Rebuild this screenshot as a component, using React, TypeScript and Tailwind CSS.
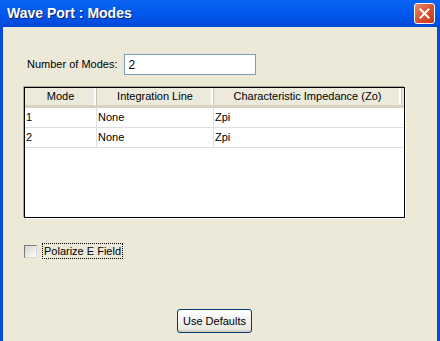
const cols = [
  { title: "Mode", w: "w-[72px]" },
  { title: "Integration Line", w: "w-[117px]" },
  { title: "Characteristic Impedance (Zo)", w: "w-[188px]" },
]

const rows = [
  ["1", "None", "Zpi"],
  ["2", "None", "Zpi"],
]

export default function App() {
  return (
    <div className="w-[440px] h-[341px] flex flex-col overflow-hidden font-['Liberation_Sans',Arial,sans-serif] text-[11px] text-black">
      {/* title bar */}
      <div className="h-[27px] shrink-0 flex items-center justify-between pl-[7px] pr-[5px] bg-gradient-to-b from-[#0A64F0] via-[#0058EE] to-[#0048D8]">
        <span className="text-white font-bold text-[14px] [text-shadow:1px_1px_0_#0A1E6E]">
          Wave Port : Modes
        </span>
        <div className="w-[21px] h-[21px] rounded-[3px] border border-white bg-gradient-to-br from-[#E8896A] via-[#D9532F] to-[#C0391B] flex items-center justify-center">
          <svg width="11" height="11" viewBox="0 0 11 11">
            <path d="M1.5 1.5 L9.5 9.5 M9.5 1.5 L1.5 9.5" stroke="white" strokeWidth="2" strokeLinecap="square" />
          </svg>
        </div>
      </div>

      {/* client area */}
      <div className="flex-1 flex flex-col bg-[#ECE9D8] border-x-[3px] border-x-[#0849D6] pt-[27px]">
        <div className="flex items-center pl-[24px] gap-[7px]">
          <span>Number of Modes:</span>
          <div className="w-[132px] h-[21px] bg-white border border-[#7F9DB9] flex items-center pl-[3px] text-[12px]">
            2
          </div>
        </div>

        {/* list */}
        <div className="ml-[21px] mt-[12px] w-[381px] h-[131px] bg-white border border-black shadow-[1px_1px_0_#ffffff,-1px_-1px_0_#ACA899] flex flex-col">
          <div className="flex h-[20px] bg-[#EBEADB] border-b-[3px] border-b-[#D6D2C2]">
            {cols.map((c, i) => (
              <div
                key={i}
                className={`${c.w} flex items-center justify-center border-r border-r-[#C7C5B2] shadow-[inset_-2px_0_0_#FFFFFF]`}
              >
                {c.title}
              </div>
            ))}
          </div>
          {rows.map((r, ri) => (
            <div key={ri} className="flex h-[20px] border-b border-b-[#E0DFE3]">
              {r.map((cell, ci) => (
                <div
                  key={ci}
                  className={`${cols[ci].w} flex items-center pl-[1px] ${ci < 2 ? "border-r border-r-[#E0DFE3]" : ""}`}
                >
                  {cell}
                </div>
              ))}
            </div>
          ))}
        </div>

        {/* checkbox */}
        <div className="flex items-center ml-[21px] mt-[25px] gap-[5px]">
          <div className="w-[13px] h-[13px] bg-gradient-to-br from-[#D4D4CE] to-white border border-t-[#7A7A7A] border-l-[#7A7A7A] border-b-[#D8D8D8] border-r-[#D8D8D8]"></div>
          <span className="border border-dotted border-black px-[1px] leading-[14px]">
            Polarize E Field
          </span>
        </div>

        {/* button */}
        <div className="flex mt-[50px] pl-[174px]">
          <button className="w-[75px] h-[24px] rounded-[3px] border border-[#003C74] bg-gradient-to-b from-white to-[#E6E5DE] shadow-[inset_0_-2px_0_#D6D0C5]">
            Use Defaults
          </button>
        </div>
      </div>
    </div>
  )
}
